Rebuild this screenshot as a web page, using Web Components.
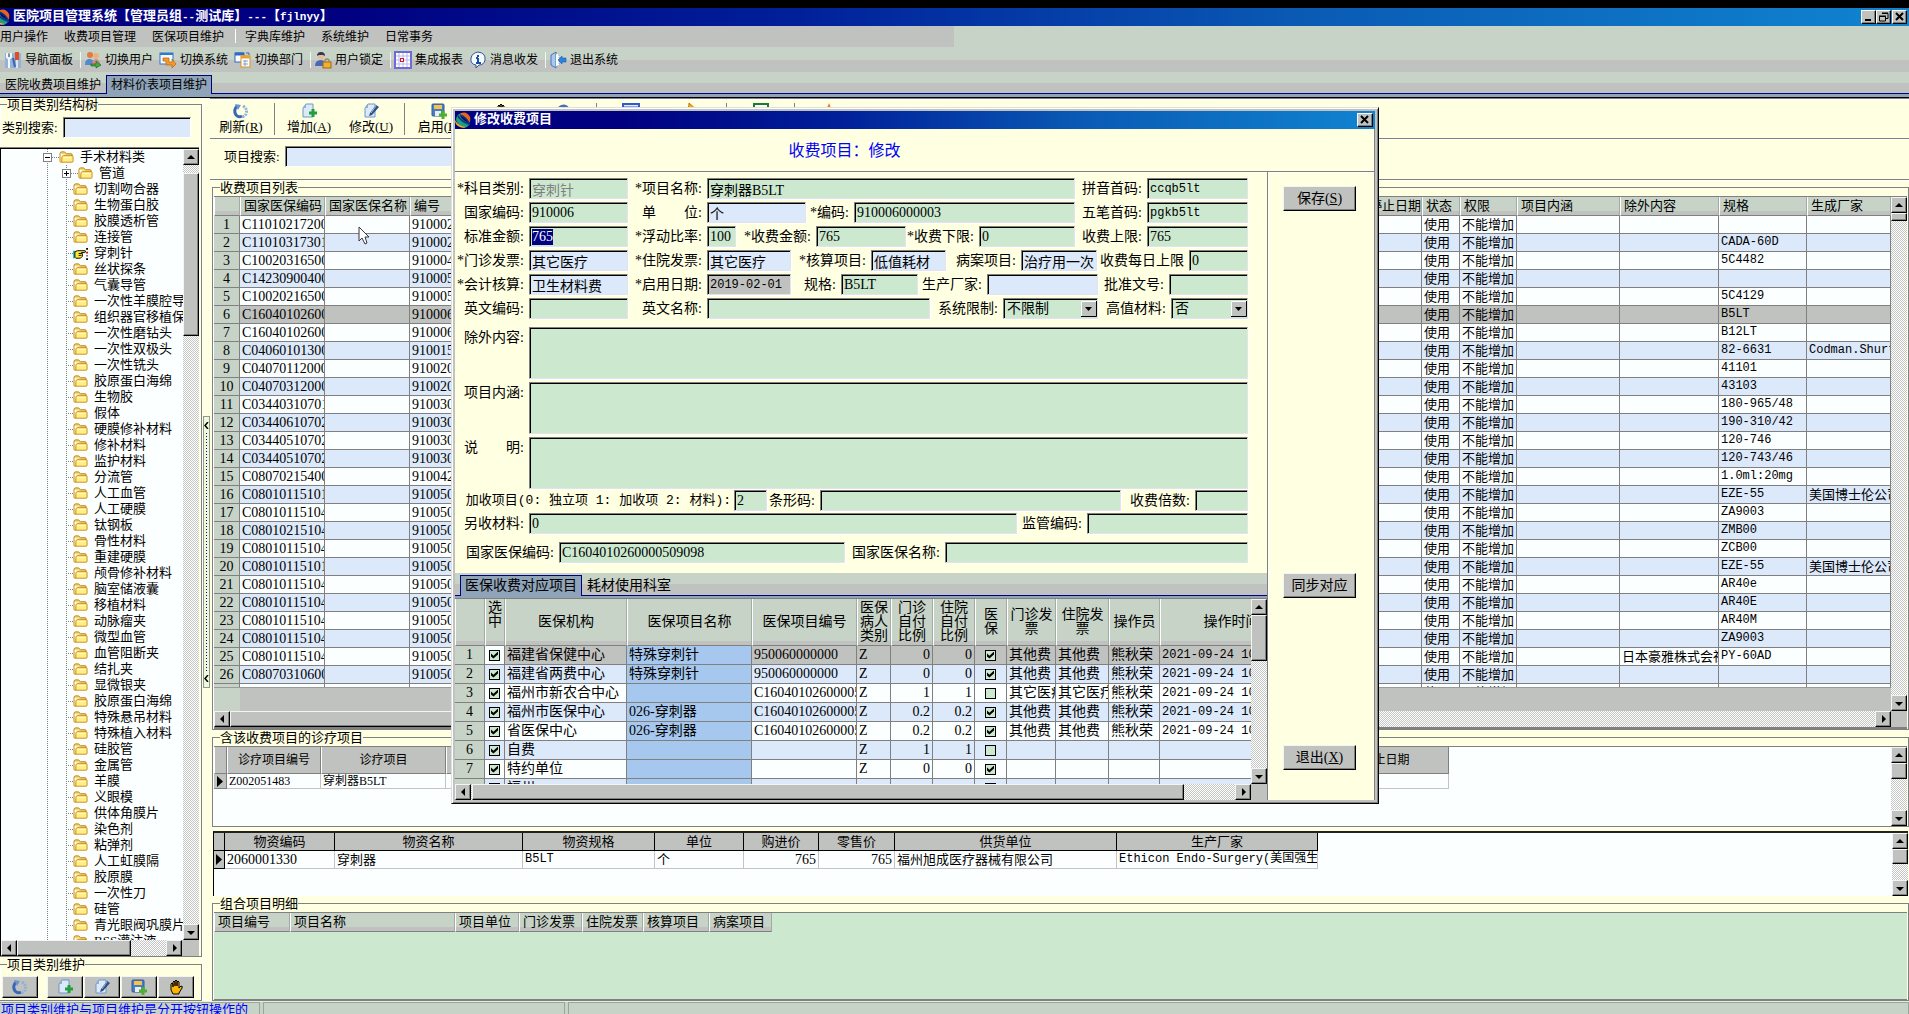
<!DOCTYPE html>
<html lang="zh-CN">
<head>
<meta charset="utf-8">
<title>医院项目管理系统</title>
<style>
:root{
  --cream:#ffffe1;--sage:#c7d3c7;--face:#c0c2bf;--mint:#cce8cf;--sky:#dbe9fa;--paper:#fcffff;
  --line:#808080;--navy:#000080;--steel:#8fa4b8;
  --song:"Liberation Serif","Noto Sans CJK SC",sans-serif;
  --code:"Liberation Mono","Noto Sans CJK SC",monospace;
}
html,body{margin:0;height:100%}
body{background:#000;color:#000;font:13px/16px var(--song);overflow:hidden}
</style>
</head>
<body>
<hospital-app></hospital-app>
<script>
const ICONS={
 logo:'<path d="M1 8Q1 3 6 1Q3 6 15 12Q13 15 9 16Q3 14 1 8Z" fill="#1f9c86"/><path d="M6 1Q12-1 15 5Q16 9 14 11Q12 5 5 3Z" fill="#e8641c"/><path d="M3 4Q7 10 14 12" stroke="#0b3c78" stroke-width="2" fill="none"/><path d="M5 3Q11 5 14 11" stroke="#0b3c78" stroke-width="1.500" fill="none"/><path d="M0 8Q3 14 11 15Q7 17 3 14Q0 12 0 8Z" fill="#f6b21b"/>',
 folder:'<path d="M1 4Q1 2 3 2H6L8 4H13Q14 4 14 5V7" fill="#f7d774" stroke="#b8790c"/><path d="M1 4V12Q1 13 2 13H3V8Q3 6 5 6H14Q15 6 15 7V12Q15 13 14 13H3" fill="#ffee88" stroke="#c98a12"/><path d="M5 8H13" stroke="#fffbd0"/>',
 point:'<path d="M0 5H2V13H0Z" fill="#17c4d4"/><path d="M2 6L5 5H13Q14 7 12 7H9V8H10V11L8 13H3L2 12Z" fill="#ffe92e" stroke="#000"/><path d="M6 8H9M6 10H9" stroke="#000"/><path d="M15 2V4M15 10V11M15 13V15" stroke="#000" stroke-width="2"/><path d="M15 6V8" stroke="#e00" stroke-width="2"/>',
 refresh:'<path d="M4 3Q0 7 3 12Q6 15 9 13" fill="none" stroke="#3a67b4" stroke-width="3"/><path d="M2 1L8 2L5 7Z" fill="#6b93cf"/><path d="M10 3Q15 6 13 11Q12 13 9 14" fill="none" stroke="#8fb0da" stroke-width="3" stroke-dasharray="2 1"/>',
 add:'<path d="M2 5L5 1H12V14H2Z" fill="#dbe9f8" stroke="#6f97c8"/><path d="M2 5H5V1Z" fill="#8db0da"/><path d="M8 10H16M12 6V14" stroke="#1fa03a" stroke-width="3"/>',
 edit:'<path d="M2 5L5 1H12V14H2Z" fill="#dbe9f8" stroke="#6f97c8"/><path d="M2 5H5V1Z" fill="#8db0da"/><path d="M13 2L16 4L9 12L6 13L7 10Z" fill="#2d4f86"/><path d="M13 3L8 10" stroke="#9fb9dd"/>',
 save:'<rect x="1" y="1" width="12" height="12" rx="1" fill="#4a7cc4" stroke="#2f5a9a"/><rect x="3" y="2" width="8" height="4" fill="#f3c34e"/><rect x="4" y="8" width="6" height="5" fill="#e8eef6"/><path d="M8 12H16M12 8V16" stroke="#4fae33" stroke-width="3"/>',
 hand:'<path d="M3 7V5Q4 3 5 5V8V3Q6 1 7 3V7V2Q8 0 9 2V7V3Q10 1 11 3V9L13 7Q15 7 14 9L11 14V15H5L3 11Z" fill="#fdb400" stroke="#000"/>',
 undo:'<path d="M3 9Q4 3 9 3Q14 4 13 10" fill="none" stroke="#4d6fae" stroke-width="3"/><path d="M0 7H7L3 13Z" fill="#4d6fae"/>',
 window:'<rect x="0" y="1" width="16" height="13" fill="#e6eefb" stroke="#2f5bd0" stroke-width="2"/><path d="M0 4H16" stroke="#2f5bd0"/><path d="M3 8H9M3 11H12" stroke="#7c9be0"/>',
 pointer:'<path d="M4 0L14 9H9L11 15H8L6 10L3 13Z" fill="#f6b219" stroke="#b87b00"/>',
 sheet:'<rect x="1" y="1" width="14" height="14" fill="#fff" stroke="#1f7a32" stroke-width="2"/><path d="M4 5L11 12M11 5L4 12" stroke="#1f7a32" stroke-width="2"/>',
 burst:'<path d="M8 0L10 5H15L12 9L14 15L8 11L2 15L4 9L1 5H6Z" fill="#ef7a2b"/>',
 tools:'<rect x="0" y="1" width="16" height="15" fill="#93b2d8"/><path d="M2 1V5L4 7V16M6 1V5L4 7" stroke="#f4f6fa" stroke-width="2" fill="none"/><path d="M4 2V5" stroke="#5b6f8e"/><path d="M12 0V8" stroke="#e34b22" stroke-width="4"/><path d="M12 8V16" stroke="#dfe5ee" stroke-width="2"/><path d="M8 6L10 15" stroke="#3766ad" stroke-width="2"/>',
 users:'<circle cx="5" cy="3" r="3" fill="#e07a46"/><circle cx="11" cy="4" r="3" fill="#e9b37f"/><path d="M0 13Q0 6 5 7Q9 7 9 13Z" fill="#5588cc"/><path d="M7 13Q7 7 11 7Q15 7 15 13Z" fill="#d88a8e"/><path d="M6 12H11V9L16 13L11 16V14H6Z" fill="#42ac3d" stroke="#1d6c20" stroke-width=".700"/>',
 swapsys:'<rect x="0" y="1" width="13" height="11" fill="#f2f8ff" stroke="#3478cc"/><path d="M0 2H13" stroke="#3478cc" stroke-width="2"/><path d="M3 6L9 6L9 10H12V7L16 12L12 16V13H6V9H3Z" fill="#f29a2a" stroke="#b8620a" stroke-width=".700"/>',
 swapdept:'<rect x="0" y="1" width="9" height="9" fill="#fff" stroke="#3367c4"/><path d="M0 2H9" stroke="#3367c4" stroke-width="3"/><rect x="6" y="4" width="9" height="11" fill="#fff" stroke="#d89122"/><path d="M6 5H15" stroke="#eca32e" stroke-width="3"/><path d="M8 9H13M8 12H13M10 8V14" stroke="#7aa0d4"/><path d="M11 1H14V3" stroke="#3367c4" fill="none"/>',
 lock:'<circle cx="6" cy="4" r="3.500" fill="#e8bd94"/><path d="M2 4Q2 0 6 0Q10 0 10 4L8 3H4Z" fill="#35355a"/><path d="M0 14Q0 8 6 8Q10 8 11 14Z" fill="#4a66b8"/><rect x="8" y="10" width="8" height="6" fill="#f0b032" stroke="#9d6a0a"/><path d="M10 10V8Q12 6 14 8V10" stroke="#9d8a5a" fill="none" stroke-width="1.500"/>',
 report:'<rect x="0" y="0" width="16" height="16" fill="#fff" stroke="#6d6bd8" stroke-width="2"/><path d="M1 4H15M1 8H15M1 12H15M4 1V15M8 1V15M12 1V15" stroke="#b9b7ee"/><rect x="5" y="6" width="4" height="4" fill="#d01830"/><rect x="6" y="7" width="2" height="2" fill="#fff"/>',
 info:'<path d="M8 0Q16 1 15 8Q14 13 9 13L6 16V13Q0 12 1 6Q2 1 8 0Z" fill="#f4f9ff" stroke="#2b5797"/><path d="M8 3V5M8 6V11M6 6H8M6 11H11" stroke="#1f4f9c" stroke-width="2"/>',
 exit:'<path d="M1 3L6 0V16L1 13Z" fill="#a8c8ec" stroke="#4777b4"/><path d="M6 2H9V14H6" fill="#fff" stroke="#98a8bb" stroke-dasharray="1 1"/><path d="M8 8L12 4V6H16V10H12V12Z" fill="#2a83e0" stroke="#165ca8" stroke-width=".600"/>',
 cursor:'<path d="M1 0V14L4 11L7 17L9 16L7 10H11Z" fill="#fff" stroke="#33363c"/>'
};
const sheet=css=>`<style>*{box-sizing:border-box}button,input,select,textarea{font:inherit;color:inherit;margin:0}${css}</style>`;
const define=(name,build,after)=>customElements.define(name,class extends HTMLElement{
  connectedCallback(){
    if(this.shadowRoot)return;
    this.attachShadow({mode:'open'}).innerHTML=build(this);
    if(after)after(this,this.shadowRoot);
  }
});
const attr=(el,n,d='')=>el.getAttribute(n)??d;

define('ui-icon',el=>{
  const s=attr(el,'size','16');
  return sheet(`:host{display:inline-block;width:${s}px;height:${s}px;flex:none}svg{display:block;overflow:visible}`)+
  `<svg width="${s}" height="${s}" viewBox="0 0 16 16" aria-hidden="true">${ICONS[attr(el,'name')]}</svg>`;
});

/* Classic scroll bar: two arrow buttons, a thumb and a dithered track */
define('scroll-bar',el=>{
  const h=el.hasAttribute('horizontal'),lead=attr(el,'lead','0'),thumb=attr(el,'thumb','16');
  const a=h?['M9 3V11L5 7Z','M6 3V11L10 7Z','向左','向右']:['M3 9H11L7 5Z','M3 6H11L7 10Z','向上','向下'];
  const b=i=>`<button aria-label="${a[i+2]}"><svg width="14" height="14" viewBox="0 0 14 14"><path d="${a[i]}"/></svg></button>`;
  return sheet(`:host{display:flex;flex:none;flex-direction:${h?'row':'column'};${h?'height':'width'}:16px;
   background:repeating-conic-gradient(#fff 0 25%,#c4c6c3 0 50%) 0 0/2px 2px}
   button,.t{flex:none;padding:0;background:var(--face);border:1px solid;border-color:#f4f4f4 #000 #000 #f4f4f4;box-shadow:inset -1px -1px #808080;overflow:hidden}
   button{width:16px;height:16px}svg{display:block}.t{${h?'width':'height'}:${thumb};margin-${h?'left':'top'}:${lead}px}.s{flex:1}`)+
   b(0)+`<div class="t"></div><div class="s"></div>`+b(1);
});

define('title-bar',()=>sheet(`:host{display:flex;flex:none;align-items:center;height:18px;color:#fff;font:bold 13px/18px var(--code);
  background:linear-gradient(90deg,#000080 18%,#00209a 42%,#0a5ab4 68%,#1084d0);padding-right:2px;white-space:nowrap}
  ::slotted(ui-icon){margin-right:3px}::slotted(span){font-size:11px}.x{margin-left:auto;display:flex}
  button{width:15px;height:14px;padding:0;background:var(--face);border:1px solid;border-color:#fff #000 #000 #fff;box-shadow:inset -1px -1px #808080}
  button:last-child{margin-left:1px}svg{display:block}:host([single]) .w{display:none}:host([single]) button{width:16px}`)+
  `<slot></slot><div class="x"><button class="w" aria-label="最小化"><svg width="13" height="12"><path d="M3 9H9" stroke="#000" stroke-width="2"/></svg></button>
  <button class="w" aria-label="还原"><svg width="13" height="12"><path d="M5 2.500H11V7.500H9M2.500 5.500H8.500V10H2.500Z" fill="none" stroke="#000"/><path d="M5 2H11M2 5H9" stroke="#000"/></svg></button>
  <button aria-label="关闭"><svg width="13" height="12"><path d="M3 2L10 9M10 2L3 9" stroke="#000" stroke-width="2"/></svg></button></div>`);

define('menu-bar',()=>sheet(`:host{display:flex;flex:none;height:21px;background:linear-gradient(90deg,var(--face) 50%,var(--sage) 50%);font-size:12px}
  button{border:0;background:none;padding:0;margin-right:16px;line-height:20px;white-space:nowrap}
  i{width:1px;height:14px;background:#fff;margin:3px 9px 0 -5px}`)+
  ['用户操作','收费项目管理','医保项目维护','|','字典库维护','系统维护','日常事务'].map(t=>t=='|'?'<i></i>':`<button>${t}</button>`).join(''));

define('main-tools',()=>sheet(`:host{display:flex;flex:none;height:25px;align-items:center;padding-left:5px;font-size:12px;
  background:linear-gradient(var(--sage) 52%,var(--face) 52%)}
  button{display:flex;align-items:center;gap:4px;border:0;background:none;padding:0;margin-right:7px;white-space:nowrap}
  i{width:1px;height:16px;background:#f4f4f4;margin-right:4px}`)+
  [['tools','导航面板'],0,['users','切换用户'],['swapsys','切换系统'],['swapdept','切换部门'],0,['lock','用户锁定'],0,['report','集成报表'],['info','消息收发'],0,['exit','退出系统']]
  .map(x=>x?`<button><ui-icon name="${x[0]}"></ui-icon>${x[1]}</button>`:'<i></i>').join(''));

define('tab-strip',el=>{
  const on=+attr(el,'selected','0');
  return sheet(`:host{display:flex;flex:none;height:26px;align-items:flex-end;padding:0 0 4px 0;font-size:12px;white-space:nowrap;
   background:linear-gradient(#0000 21px,var(--navy) 21px 22px,var(--steel) 22px 25px,#000 25px),linear-gradient(var(--sage) 11px,var(--face) 11px)}
   :host([inner]){font-size:14px;padding:0 0 3px 5px;background:linear-gradient(#0000 22px,var(--navy) 22px 23px,var(--steel) 23px 25px,var(--line) 25px),linear-gradient(var(--sage) 11px,var(--face) 11px)}
   button{border:1px solid transparent;border-bottom:0;background:none;height:19px;padding:0 4px;line-height:17px;white-space:nowrap}
   :host([inner]) button{height:21px;padding:0 4px;line-height:20px}
   button[aria-selected=true]{border-color:var(--navy);background:var(--steel)}`)+
   attr(el,'tabs').split(',').map((t,i)=>`<button role="tab" aria-selected="${i==on}">${t}</button>`).join('');
});

define('group-box',el=>sheet(`:host{display:flex;flex-direction:column;min-height:0;min-width:0}
  fieldset{flex:1;min-width:0;min-height:0;margin:0;padding:0;border:1px solid var(--line);display:flex;flex-direction:column;box-shadow:inset 1px 0 #fff,1px 0 #fff}
  legend{line-height:13px;padding:0;margin-left:7px}:host([left]) fieldset{border-left:0}`)+
  `<fieldset><legend>${attr(el,'caption')}</legend><slot></slot></fieldset>`);

const TREE='管道,切割吻合器,生物蛋白胶,胶膜透析管,连接管,穿刺针,丝状探条,气囊导管,一次性羊膜腔导管,组织器官移植保存液,一次性磨钻头,一次性双极头,一次性铣头,胶原蛋白海绵,生物胶,假体,硬膜修补材料,修补材料,监护材料,分流管,人工血管,人工硬膜,钛钢板,骨性材料,重建硬膜,颅骨修补材料,脑室储液囊,移植材料,动脉瘤夹,微型血管,血管阻断夹,结扎夹,显微银夹,胶原蛋白海绵,特殊悬吊材料,特殊植入材料,硅胶管,金属管,羊膜,义眼模,供体角膜片,染色剂,粘弹剂,人工虹膜隔,胶原膜,一次性刀,硅管,青光眼阀巩膜片,BSS灌注液'.split(',');
define('category-tree',()=>sheet(`:host{display:flex;flex:1;flex-direction:column;min-height:0;border:1px solid #000;border-width:1px 0 0 1px;margin-right:2px;box-shadow:0 -1px #808080}
  .m{flex:1;display:flex;min-height:0}.v{flex:1;overflow:hidden;background:var(--paper);min-width:0}
  ul{list-style:none;margin:0;padding:0}
  .v>ul{padding-left:46px;background:repeating-linear-gradient(#808080 0 1px,#0000 1px 2px) 46px 0/1px 100% no-repeat}
  .r{display:flex;height:16px;align-items:center;white-space:nowrap}
  .r span{margin-left:6px}
  .r b{width:9px;height:9px;border:1px solid #808080;background:linear-gradient(#000,#000) 1px 3px/5px 1px no-repeat #fff;flex:none}
  .r b.p{background:linear-gradient(#000,#000) 1px 3px/5px 1px no-repeat,linear-gradient(#000,#000) 3px 1px/1px 5px no-repeat #fff}
  .r i{height:1px;width:7px;flex:none;background:repeating-linear-gradient(90deg,#808080 0 1px,#0000 1px 2px)}
  .top b{margin-left:-4px}
  ul ul{margin-left:19px;background:repeating-linear-gradient(#808080 0 1px,#0000 1px 2px) 0 0/1px 100% no-repeat}
  ul ul i{width:12px}ul ul b{margin-left:-4px}ul ul b+i{width:7px}
  .h{display:flex}.h scroll-bar{flex:1}.c{width:17px;background:var(--face)}`)+
  `<div class="m"><div class="v"><ul role="tree"><li><div class="r top"><b></b><i></i><ui-icon name="folder" size="15"></ui-icon><span>手术材料类</span></div><ul>`+
  TREE.map((t,i)=>`<li class="r">${i?'':'<b class="p"></b>'}<i></i><ui-icon name="${t=='穿刺针'?'point':'folder'}" size="15"></ui-icon><span>${t}</span></li>`).join('')+
  `</ul></li></ul></div><scroll-bar lead="8" thumb="163px"></scroll-bar></div><div class="h"><scroll-bar horizontal thumb="114px"></scroll-bar><div class="c"></div></div>`);

define('search-field',el=>sheet(`:host{display:flex;align-items:center;flex:none}label{white-space:nowrap;margin-right:5px}
  input{height:21px;width:${attr(el,'width')}px;border:1px solid;border-color:#808080 #fff #fff #808080;box-shadow:inset 1px 1px #000;background:var(--sky);border-radius:0;padding:0 3px;outline:0}`)+
  `<label for="q">${attr(el,'label')}</label><input id="q" type="text">`);

define('edit-tools',()=>sheet(`:host{display:flex;flex:none;height:41px;border-top:1px solid var(--line);border-bottom:1px solid var(--line);box-shadow:inset 0 1px #fff,0 1px #fff;padding-top:4px}
  button{display:flex;flex-direction:column;align-items:center;gap:0;border:0;background:none;padding:0;width:62px;height:31px;flex:none;line-height:15px;white-space:nowrap}
  i{width:1px;height:32px;background:var(--line);margin:0 3px 0 2px;flex:none}`)+
  [['refresh','刷新','R'],0,['add','增加','A'],['edit','修改','U'],0,['save','启用','E'],['hand'],['undo'],0,['window'],['pointer'],0,['sheet'],0,['burst']]
  .map(x=>x?`<button${x[1]?'':' aria-label="'+x[0]+'"'}><ui-icon name="${x[0]}"></ui-icon>${x[1]?`<span>${x[1]}(<u>${x[2]}</u>)</span>`:''}</button>`:'<i></i>').join(''));

/* Column kinds: n = codes and numbers, m = monospaced text, r = right aligned number, c = tick box, k = row number */
const codes='C11010217200,C11010317301,C10020316500,C14230900400,C10020216500,C16040102600,C16040102600,C04060101300,C04070112000,C04070312000,C03440310701,C03440610702,C03440510702,C03440510702,C08070215400,C08010115101,C08010115104,C08010215104,C08010115104,C08010115101,C08010115104,C08010115104,C08010115104,C08010115104,C08010115104,C08070310600'.split(',');
const nums='910002,910002,910004,910005,910005,910006,910006,910015,910020,910020,910030,910030,910030,910030,910042,910050,910050,910050,910050,910050,910050,910050,910050,910050,910050,910050'.split(',');
const specs=',CADA-60D,5C4482,,5C4129,B5LT,B12LT,82-6631,41101,43103,180-965/48,190-310/42,120-746,120-743/46,1.0ml:20mg,EZE-55,ZA9003,ZMB00,ZCB00,EZE-55,AR40e,AR40E,AR40M,ZA9003,PY-60AD,'.split(',');
const makers={7:['m','Codman.Shurtleff'],15:['','美国博士伦公司'],19:['','美国博士伦公司']};
const GRIDS={
 charges:{cols:[[26,'','k'],[85,'国家医保编码','n'],[85,'国家医保名称'],[85,'编号','n'],['',''],[57,'停止日期'],[38,'状态'],[57,'权限'],[103,'项目内涵'],[99,'除外内容'],[88,'规格','m'],[84,'生成厂家']],
  rows:codes.map((c,i)=>[i+1,c,'',nums[i],'','','使用','不能增加','',i==24?'日本豪雅株式会社':'',specs[i],makers[i]||'']).concat([['','','','','','','使用','不能增加','','','','']]),
  sel:5,tail:24,head:19,row:18,h:[0,'calc(50% + 40px)'],v:[0,8]},
 treat:{width:1235,cols:[[13,'','k'],[94,'诊疗项目编号','s'],[125,'诊疗项目','s'],['',''],[127,'停止日期','s']],
  rows:[['▶','Z002051483','穿刺器B5LT','','']],head:27,row:15,v:[0,16]},
 goods:{width:1104,cols:[[11,'','k'],[110,'物资编码','n'],[188,'物资名称'],[132,'物资规格','m'],[89,'单位'],[75,'购进价','r'],[76,'零售价','r'],[222,'供货单位'],[201,'生产厂家','m']],
  rows:[['▶','2060001330','穿刺器','B5LT','个','765','765','福州旭成医疗器械有限公司','Ethicon Endo-Surgery(美国强生']],head:18,row:18,v:[0,15]},
 combo:{width:558,cols:[[76,'项目编号'],[165,'项目名称'],[64,'项目单位'],[63,'门诊发票'],[61,'住院发票'],[66,'核算项目'],[63,'病案项目']],rows:[],head:19,row:18},
 insure:{width:848,cols:[[30,'','k'],[20,'选<br>中<br>&nbsp;','c'],[122,'医保机构'],[125,'医保项目名称','b'],[105,'医保项目编号','n'],[34,'医保病人类别','n'],[42,'门诊自付比例','r'],[42,'住院自付比例','r'],[32,'医<br>保','c'],[49,'门诊发票'],[53,'住院发票'],[51,'操作员'],[143,'操作时间','m']],
  rows:[[1,1,'福建省保健中心','特殊穿刺针','950060000000','Z','0','0',1,'其他费','其他费','熊秋荣','2021-09-24 10'],
   [2,1,'福建省两费中心','特殊穿刺针','950060000000','Z','0','0',1,'其他费','其他费','熊秋荣','2021-09-24 10'],
   [3,1,'福州市新农合中心','','C16040102600005','Z','1','1',0,'其它医疗','其它医疗','熊秋荣','2021-09-24 10'],
   [4,1,'福州市医保中心','026-穿刺器','C16040102600005','Z','0.2','0.2',1,'其他费','其他费','熊秋荣','2021-09-24 10'],
   [5,1,'省医保中心','026-穿刺器','C16040102600005','Z','0.2','0.2',1,'其他费','其他费','熊秋荣','2021-09-24 10'],
   [6,1,'自费','','','Z','1','1',0,'','','',''],[7,1,'特约单位','','','Z','0','0',1,'','','',''],['',1,'福州','','','','','',1,'','','','']],
  sel:0,head:47,row:19,h:[1,'712px'],v:[0,46]}
};
define('data-grid',el=>{
  const g=GRIDS[attr(el,'source')];
  const cell=(v,i)=>{
    let k=g.cols[i][2]||'';
    if(Array.isArray(v)){k=v[0];v=v[1]}
    if(k=='k')return `<td class="k">${v==='▶'?'<svg width="7" height="11" viewBox="0 0 7 11"><path d="M0 0L6 5.500L0 11Z"/></svg>':v}</td>`;
    if(k=='c')return `<td class="c"><input type="checkbox" aria-label="选中"${v?' checked':''}></td>`;
    return `<td class="${k}">${v}</td>`;
  };
  return sheet(`:host{display:grid;grid-template:minmax(0,1fr) auto/minmax(0,1fr) auto;min-height:0;min-width:0;border-top:1px solid var(--line);background:var(--paper)}
  .view{display:flex;flex-direction:column;min-height:0;overflow:hidden}.clip{flex:1;overflow:hidden;min-height:0}
  table{table-layout:fixed;border-collapse:separate;border-spacing:0;width:${g.width?g.width+'px':'100%'}}
  th,td{padding:0 2px;overflow:hidden;white-space:nowrap;border:solid var(--line);border-width:0 1px 1px 0;font-weight:400;text-align:left;line-height:16px}
  th{height:${g.head}px;padding:0 3px;border-left:1px solid #fff;background:linear-gradient(var(--sage) calc(100% - 4px),var(--face) 0);border-right-color:#a4aaa4}
  td{height:${g.row}px;line-height:${g.row-1}px}tbody tr:nth-child(even) td{background:var(--sky)}
  tr.sel td{background:var(--face)!important}
  td.n{font-size:14px}td.m{font:12px/${g.row-1}px var(--code)}td.r{font-size:14px;text-align:right}
  tr td.k{background:var(--sage)!important;text-align:center;font-size:14px}td.c{text-align:center}
  td svg{display:block;margin:auto}
  input{appearance:none;display:block;width:11px;height:11px;margin:0 auto;border:1px solid #000;background:var(--mint)}
  input:checked::before{content:"";display:block;width:7px;height:7px;margin:1px;background:#000;clip-path:polygon(0 30%,35% 62%,100% 0,100% 42%,35% 100%,0 72%)}
  .tail{flex:none;height:${g.tail||0}px;background:linear-gradient(90deg,var(--sage) 26px,var(--face) 26px);border-top:1px solid #9a9c99}
  .corner{background:var(--face)}
  :host([look=form]){font-size:14px}
  :host([look=form]) th{white-space:normal;text-align:center;line-height:14px;padding:0 2px;word-break:break-all}
  :host([look=form]) td.b{background:#a6c8ef!important}:host([look=form]) tr.sel td.c:nth-child(2){background:var(--paper)!important}
  :host([look=plain]) th,:host([look=dark]) th{background:var(--face);text-align:center;border-right-color:var(--line)}
  :host([look=plain]){font-size:12px}:host([look=plain]) td{border-color:#c4c4c4}
  :host([look=plain]) td.s{font-size:12px}
  :host([look=plain]) tr td.k,:host([look=dark]) tr td.k{background:var(--face)!important;padding:0;border-color:var(--line)}
  :host([look=dark]){border:solid #000;border-width:2px 0 0 1px;border-top-color:#222}
  :host([look=dark]) th{border-left:0;border-color:#000}:host([look=dark]) td{border-color:#c4c4c4}
  :host([look=dark]) tr td.k{border-color:#000}
  :host([look=mint]){background:var(--mint)}`)+
  `<div class="view"><div class="clip"><table><colgroup>${g.cols.map(c=>`<col${c[0]?` style="width:${c[0]}px"`:''}>`).join('')}</colgroup>
  <thead><tr>${g.cols.map(c=>`<th>${c[1]}</th>`).join('')}</tr></thead>
  <tbody>${g.rows.map((r,n)=>`<tr${n===g.sel?' class="sel"':''}>${r.map(cell).join('')}</tr>`).join('')}</tbody></table></div>${g.tail?'<div class="tail"></div>':''}</div>
  ${g.v?`<scroll-bar lead="${g.v[0]}" thumb="${g.v[1]}px"></scroll-bar>`:'<span></span>'}
  ${g.h?`<scroll-bar horizontal lead="${g.h[0]}" thumb="${g.h[1]}"></scroll-bar><div class="corner"></div>`:''}`;
});

/* Labelled control of the form: text box, drop-down or text area */
define('form-field',el=>{
  const t=attr(el,'type','text'),v=attr(el,'value'),w=attr(el,'w');
  const c=t=='area'?'<textarea id="f"></textarea>':
    t=='select'?`<div class="s"><select id="f"><option>${v}</option></select><svg width="16" height="16" viewBox="0 0 16 16" aria-hidden="true"><path d="M0 0H16V16H0Z" fill="#c0c2bf"/><path d="M.500 15V.500H15" stroke="#fff" fill="none"/><path d="M0 15.500H15.500V0" stroke="#000" fill="none"/><path d="M4 6H11L7.500 10Z"/></svg></div>`:
    `<input id="f" type="text" value="${v}">`;
  return sheet(`:host{display:flex;${w?'flex:none':'flex:1'};min-width:0}
   label{width:${attr(el,'lw')}px;flex:none;text-align:right;padding-right:5px;white-space:pre;line-height:21px;font-size:14px}
   :host([long]) label{font:13px/21px var(--code);padding-right:3px}
   input,textarea,.s{${w?`width:${w}px`:'flex:1;width:0'};height:21px;border:1px solid;border-color:#808080 #e4e4e4 #e4e4e4 #808080;box-shadow:inset 1px 1px #000,1px 1px #fff;background:var(--mint);border-radius:0;padding:0 2px;outline:0;resize:none;font-size:14px}
   textarea{height:52px;display:block}
   :host([blue]) input{background:var(--sky)}:host([gray]) input{background:var(--face)}:host([off]) input{color:#808080}
   :host([mono]) input{font:12px var(--code)}
   ::selection{background:#000080;color:#fff}
   .s{display:grid;grid-template:1fr/1fr 16px;padding:1px 0 0 1px;align-items:center}
   select{appearance:none;border:0;background:none;padding:0 2px;outline:0;min-width:0;height:18px}svg{display:block}`)+
   `<label for="f">${attr(el,'label')}</label>${c}`;
},(el,root)=>{ if(el.hasAttribute('active')){const i=root.getElementById('f');i.focus();i.select();} });

define('push-button',()=>sheet(`:host{display:block}button{width:73px;height:25px;padding:0;font-size:14px;background:var(--face);border:1px solid;border-color:#f4f4f4 #000 #000 #f4f4f4;box-shadow:inset -1px -1px #808080}`)+`<button><slot></slot></button>`);
define('icon-button',el=>sheet(`:host{display:block}button{display:flex;align-items:center;justify-content:center;width:36px;height:22px;padding:0;background:var(--face);border:1px solid;border-color:#f4f4f4 #000 #000 #f4f4f4;box-shadow:inset -1px -1px #808080}`)+`<button aria-label="${attr(el,'name')}"><ui-icon name="${attr(el,'name')}"></ui-icon></button>`);

define('pane-splitter',()=>sheet(`:host{display:block;width:8px;padding-top:318px;border-left:1px solid #fff}
  button{display:flex;flex-direction:column;align-items:center;justify-content:space-between;width:7px;height:272px;padding:5px 0;border:1px solid #8c9c8c;
  background:repeating-linear-gradient(var(--navy) 0 1px,#0000 1px 3px) 2px 16px/1px 238px no-repeat,#f2f8dc}svg{display:block}`)+
  `<button aria-label="收起">${'<svg width="5" height="7" viewBox="0 0 5 7"><path d="M4 0L1 3.500L4 7" fill="none" stroke="#000" stroke-width="1.500"/></svg>'.repeat(2)}</button>`);

define('status-bar',()=>sheet(`:host{display:flex;gap:3px;flex:none;height:13px;background:var(--sage);overflow:hidden;border-top:1px solid #e8ece4}
  div{border:1px solid #9aa69a;border-bottom:0;border-left:0;color:#00f;line-height:14px;white-space:nowrap;padding-left:1px;overflow:hidden;height:20px}
  div+div{border-left:1px solid #9aa69a}.a{width:260px}.b{width:302px}.c{flex:1}`)+
  `<div class="a">项目类别维护与项目维护是分开按钮操作的</div><div class="b"></div><div class="c"></div>`);

define('edit-dialog',()=>sheet(`:host{display:flex;flex-direction:column;background:var(--face);border:1px solid;border-color:#dfdfdf #000 #000 #dfdfdf;box-shadow:inset 1px 1px #fff,inset -1px -1px #808080;padding:3px}
  h1{margin:0;font:16px/42px var(--song);color:#00f;text-align:center;border-bottom:1px solid var(--line);height:43px;padding:1px 140px 0 0}
  .body{flex:1;display:flex;flex-direction:column;background:var(--cream);min-height:0;border-right:1px solid var(--line)}
  .cols{flex:1;display:flex;min-height:0;box-shadow:inset 0 1px #fff}
  .left{flex:1;min-width:0;display:flex;flex-direction:column}
  .right{width:107px;border-left:1px solid var(--line);box-shadow:inset 1px 0 #fff;padding:14px 0 0 15px}
  .right push-button{margin-bottom:362px}.right push-button+push-button{margin-bottom:147px}
  form{padding:6px 19px 10px 2px;margin:0}
  .rows{display:flex;flex-direction:column;gap:3px}.rows+.rows{margin-top:8px}.more{gap:2px;display:flex;flex-direction:column;margin-top:1px}
  .rows>div,.more>div{display:flex}.codes{padding-top:6px}
  data-grid{flex:1;border-top:0}`)+`
  <title-bar single><ui-icon name="logo"></ui-icon>修改收费项目</title-bar>
  <div class="body"><h1>收费项目：修改</h1><div class="cols"><div class="left"><form>
  <div class="rows">
   <div><form-field label="*科目类别:" lw="72" w="99" value="穿刺针" off></form-field><form-field label="*项目名称:" lw="79" value="穿刺器B5LT"></form-field><form-field label="拼音首码:" lw="72" w="101" value="ccqb5lt" mono></form-field></div>
   <div><form-field label="国家编码:" lw="72" w="99" value="910006"></form-field><form-field label="单　　位:" lw="79" w="99" value="个" blue></form-field><form-field label="*编码:" lw="48" value="910006000003"></form-field><form-field label="五笔首码:" lw="72" w="101" value="pgkb5lt" mono></form-field></div>
   <div><form-field label="标准金额:" lw="72" w="99" value="765" active></form-field><form-field label="*浮动比率:" lw="79" w="29" value="100"></form-field><form-field label="*收费金额:" lw="80" w="90" value="765"></form-field><form-field label="*收费下限:" lw="73" value="0"></form-field><form-field label="收费上限:" lw="72" w="101" value="765"></form-field></div>
   <div><form-field label="*门诊发票:" lw="72" w="99" value="其它医疗" blue></form-field><form-field label="*住院发票:" lw="79" w="84" value="其它医疗" blue></form-field><form-field label="*核算项目:" lw="80" w="75" value="低值耗材" blue></form-field><form-field label="病案项目:" lw="75" w="76" value="治疗用一次性" blue></form-field><form-field label="收费每日上限" lw="92" value="0"></form-field></div>
   <div><form-field label="*会计核算:" lw="72" w="99" value="卫生材料费" blue></form-field><form-field label="*启用日期:" lw="79" w="84" value="2019-02-01" gray mono></form-field><form-field label="规格:" lw="50" w="77" value="B5LT"></form-field><form-field label="生产厂家:" lw="69" w="111" blue></form-field><form-field label="批准文号:" lw="71"></form-field></div>
   <div><form-field label="英文编码:" lw="72" w="99"></form-field><form-field label="英文名称:" lw="79"></form-field><form-field label="系统限制:" lw="73" w="95" type="select" value="不限制"></form-field><form-field label="高值材料:" lw="73" w="77" type="select" value="否"></form-field></div>
  </div>
  <div class="rows">
   <div><form-field type="area" label="除外内容:" lw="72"></form-field></div>
   <div><form-field type="area" label="项目内涵:" lw="72"></form-field></div>
   <div><form-field type="area" label="说　　明:" lw="72"></form-field></div>
  </div>
  <div class="more">
   <div><form-field label="加收项目(0: 独立项 1: 加收项 2: 材料):" lw="277" w="33" value="2" long></form-field><form-field label="条形码:" lw="53"></form-field><form-field label="收费倍数:" lw="74" w="53"></form-field></div>
   <div><form-field label="另收材料:" lw="72" value="0"></form-field><form-field label="监管编码:" lw="70" w="161"></form-field></div>
   <div class="codes"><form-field label="国家医保编码:" lw="102" w="286" value="C1604010260000509098"></form-field><form-field label="国家医保名称:" lw="100"></form-field></div>
  </div></form>
  <tab-strip inner tabs="医保收费对应项目,耗材使用科室"></tab-strip>
  <data-grid look="form" source="insure"></data-grid></div>
  <div class="right"><push-button>保存(<u>S</u>)</push-button><push-button>同步对应</push-button><push-button>退出(<u>X</u>)</push-button></div>
  </div></div>`);

define('hospital-app',()=>sheet(`:host{box-sizing:border-box;display:flex;flex-direction:column;height:100vh;padding-top:8px;background:#000;overflow:hidden;position:relative}
  main{flex:1;display:flex;min-height:0;background:var(--cream)}
  aside{width:202px;display:flex;flex-direction:column;gap:1px;min-height:0}
  aside group-box:first-child{flex:1}
  aside search-field{margin:6px 0 10px 2px}
  .acts{display:flex;gap:1px;padding:5px 0 2px 2px}.acts icon-button:first-child{margin-right:8px}
  .work{flex:1;min-width:0;display:flex;flex-direction:column}
  .find{flex:none;height:41px;padding:7px 0 0 14px;border-bottom:1px solid var(--line);box-shadow:0 1px #fff}
  .work group-box{margin-left:2px}.work data-grid{margin:2px 1px 0 1px}
  .a{flex:1;padding-top:1px}.a data-grid{flex:1;border-bottom:2px solid var(--line)}
  .b{padding-top:1px}.b data-grid{height:80px}
  .work>data-grid{height:65px;margin:4px 1px 0 3px;flex:none}
  .d{padding-top:1px}.d data-grid{height:88px;border-bottom:1px solid var(--line)}
  edit-dialog{position:absolute;left:451px;top:107px;width:928px;height:697px}
  .cur{position:absolute;left:358px;top:227px}`)+`
  <title-bar><ui-icon name="logo" style="margin-left:-6px"></ui-icon>医院项目管理系统【管理员组<span>--</span>测试库】<span>---</span>【<span>fjlnyy</span>】</title-bar>
  <menu-bar></menu-bar><main-tools></main-tools>
  <tab-strip selected="1" tabs="医院收费项目维护,材料价表项目维护"></tab-strip>
  <main>
   <aside><group-box left caption="项目类别结构树"><search-field label="类别搜索:" width="128"></search-field><category-tree></category-tree></group-box>
    <group-box left caption="项目类别维护"><div class="acts"><icon-button name="refresh"></icon-button><icon-button name="add"></icon-button><icon-button name="edit"></icon-button><icon-button name="save"></icon-button><icon-button name="hand"></icon-button></div></group-box></aside>
   <pane-splitter></pane-splitter>
   <div class="work"><edit-tools></edit-tools>
    <div class="find"><search-field label="项目搜索:" width="300"></search-field></div>
    <group-box class="a" caption="收费项目列表"><data-grid source="charges"></data-grid></group-box>
    <group-box class="b" caption="含该收费项目的诊疗项目"><data-grid look="plain" source="treat"></data-grid></group-box>
    <data-grid look="dark" source="goods"></data-grid>
    <group-box class="d" caption="组合项目明细"><data-grid look="mint" source="combo"></data-grid></group-box>
   </div>
  </main>
  <status-bar></status-bar>
  <edit-dialog role="dialog" aria-label="修改收费项目"></edit-dialog>
  <ui-icon class="cur" name="cursor"></ui-icon>`);
</script>
</body>
</html>
